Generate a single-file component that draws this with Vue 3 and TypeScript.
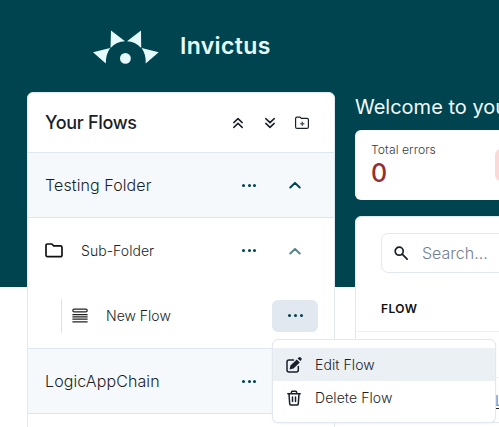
<script setup lang="ts">
interface MenuItem { label: string; icon: 'edit' | 'trash'; active: boolean }
const menu: MenuItem[] = [
  { label: 'Edit Flow', icon: 'edit', active: true },
  { label: 'Delete Flow', icon: 'trash', active: false },
]
</script>

<template>
  <div class="page">
    <header class="brand">
      <svg class="logo" width="66" height="34" viewBox="0 0 66 34">
        <path d="M18 .6 32 11.3Q23.4 11.6 17.5 18Z" />
        <path d="M48 .6 34 11.3Q42.2 11.6 48.2 18Z" />
        <path d="M0 22.2 17.2 17.9Q12.5 24.5 12.8 33.5Z" />
        <path d="M65.7 22.2 48.6 17.9Q53.3 24.5 52.7 33.5Z" />
        <circle cx="32.4" cy="28.4" r="5.4" />
      </svg>
      <span class="name">Invictus</span>
    </header>
    <div class="columns">
      <aside class="panel">
        <div class="row head">
          <h2>Your Flows</h2>
          <svg class="i1" width="12" height="12" viewBox="0 0 12 12"><path d="m1.8 5.6 4.2-4 4.2 4M1.8 10.4l4.2-4 4.2 4" /></svg>
          <svg class="i2" width="12" height="12" viewBox="0 0 12 12"><path d="m1.8 1.6 4.2 4 4.2-4M1.8 6.4l4.2 4 4.2-4" /></svg>
          <svg class="i3" width="16" height="14" viewBox="0 0 16 14"><path d="M1.6 10.9V2.6q0-1.5 1.5-1.5h2.7l1.7 1.3h5.5q1.4 0 1.4 1.4v7.1q0 1.5-1.4 1.5H3.1q-1.5 0-1.5-1.5Z" /><path d="M8.3 6.3v3M6.8 7.8h3" class="plus" /></svg>
        </div>
        <div class="row folder">
          <span class="title">Testing Folder</span>
          <i class="dots"><b /><b /><b /></i>
          <svg class="chev" width="12" height="8" viewBox="0 0 12 8"><path d="m1.3 6.5 4.7-4.6 4.7 4.6" /></svg>
        </div>
        <div class="row sub">
          <svg class="fold" width="18" height="15" viewBox="0 0 18 15"><path d="M1 12V2.6Q1 1 2.6 1h4.2l1.9 1.8h6.7Q17 2.8 17 4.4V12q0 1.7-1.6 1.7H2.6Q1 13.7 1 12Z" /></svg>
          <span class="small">Sub-Folder</span>
          <i class="dots"><b /><b /><b /></i>
          <svg class="chev faded" width="12" height="8" viewBox="0 0 12 8"><path d="m1.3 6.5 4.7-4.6 4.7 4.6" /></svg>
        </div>
        <div class="row flow">
          <span class="rule" />
          <svg class="stack" width="16" height="15" viewBox="0 0 16 15"><rect x=".8" y="1.1" width="14.4" height="2.8" rx="1.4" /><path d="M.4 6.6h15.2M.4 8.8h15.2M.4 11.2h15.2M.4 13.9h15.2" /></svg>
          <span class="small">New Flow</span>
          <button class="more"><i class="dots"><b /><b /><b /></i></button>
        </div>
        <div class="row folder">
          <span class="title">LogicAppChain</span>
          <i class="dots"><b /><b /><b /></i>
        </div>
      </aside>
      <main class="main">
        <h1>Welcome to you</h1>
        <section class="stat">
          <div><p class="label">Total errors</p><p class="value">0</p></div>
          <span class="badge" />
        </section>
        <section class="table">
          <div class="search">
            <svg width="14" height="14" viewBox="0 0 14 14"><circle cx="5.2" cy="5.2" r="4" /><path d="m8.2 8.2 4.9 4.9" /></svg>
            <span>Search...</span>
          </div>
          <div class="th">FLOW</div>
          <div class="tr" />
          <div class="tr second"><a class="link">L</a></div>
        </section>
      </main>
    </div>
    <div class="menu">
      <div v-for="m in menu" :key="m.label" class="item" :class="{ active: m.active }">
        <svg v-if="m.icon === 'edit'" width="16" height="16" viewBox="0 0 16 16">
          <path d="M7.5 3H3Q1 3 1 5v8q0 2 2 2h7.3q2 0 2-2V9.5" class="line" />
          <path d="m3.6 12.4.8-4 6.4-6 3 3-6.3 6.2Z M11.6 1.6 12.7.5q1-.8 2 0l.6.6q.8 1 0 2l-1 1Z" class="fill" />
        </svg>
        <svg v-else width="16" height="16" viewBox="0 0 16 16"><path d="M1.8 3.7h12.4M5.4 3.5V2.2q0-1 1-1h3.2q1 0 1 1v1.3M3 4l.7 9.6q.1 1.5 1.6 1.5h5.4q1.5 0 1.6-1.5L13 4M6.5 6.9v4.6M9.5 6.9v4.6" class="line" /></svg>
        <span>{{ m.label }}</span>
      </div>
    </div>
  </div>
</template>

<style>
body { margin: 0; overflow: hidden; }
</style>

<style scoped>
* { box-sizing: border-box; }
.page { position: relative; width: 499px; height: 427px; overflow: hidden; font-family: Inter, sans-serif; color: #1b1f27; background: linear-gradient(#00444f 287px, #fff 287px); }
svg { flex: none; fill: none; stroke: #1b1f2b; stroke-width: 1.5; stroke-linecap: round; stroke-linejoin: round; }
.brand { height: 92px; padding: 30px 0 0 93px; display: flex; align-items: flex-start; }
.logo { fill: #e6fbff; stroke: none; }
.name { margin-left: 21px; font-size: 23px; line-height: 32px; font-weight: 600; letter-spacing: .35px; color: #e6fbff; }
.columns { display: flex; align-items: flex-start; }
.panel { width: 308px; height: 345px; margin-left: 27px; flex: none; background: #fff; border: 1px solid #e1e8f0; border-radius: 6px; overflow: hidden; }
.row { display: flex; align-items: center; height: 65px; padding-left: 17px; border-bottom: 1px solid #dde7ef; }
.head { height: 60px; }
h2 { margin: 0; width: 187px; font-size: 18px; font-weight: 500; letter-spacing: -.3px; }
.i2 { margin-left: 20px; }
.i3 { margin-left: 18px; stroke-width: 1.2; }
.plus { stroke: #555b65; stroke-width: 1.5; }
.folder { background: #f5f9fc; }
.title { width: 197px; font-size: 16px; font-weight: 350; letter-spacing: .1px; white-space: nowrap; }
.dots { width: 14px; display: flex; justify-content: space-between; }
.dots b { width: 3px; height: 3px; border-radius: 50%; background: #00444f; }
.more .dots { width: 15px; }
.chev { margin-left: 33px; stroke: #00444f; stroke-width: 2; }
.faded { opacity: .65; }
.sub { border-bottom: 0; }
.fold { stroke: #111; stroke-width: 1.7; }
.small { font-size: 14px; font-weight: 350; white-space: nowrap; }
.sub .small { width: 161px; margin-left: 18px; letter-spacing: .05px; }
.flow { height: 66px; padding-left: 33px; }
.rule { width: 1px; height: 34px; background: #dde3eb; }
.stack { margin-left: 10px; stroke: #222; stroke-width: 1.2; stroke-linecap: butt; }
.flow .small { width: 148px; margin-left: 18px; }
.more { width: 46px; height: 32px; margin-left: 18px; padding: 0; display: flex; align-items: center; justify-content: center; border: 0; border-radius: 6px; background: #e1e8f0; }
.main { width: 200px; margin-left: 20px; flex: none; }
h1 { margin: 0 0 8px; height: 30px; font-size: 20px; line-height: 30px; font-weight: 400; color: #f1fbff; white-space: nowrap; }
.stat { height: 70px; padding: 12px 16px; display: flex; background: #fff; border-radius: 6px; }
.stat div { width: 124px; flex: none; }
p { margin: 0; }
.label { font-size: 12.2px; line-height: 16px; font-weight: 350; letter-spacing: .05px; color: #373c43; }
.value { font-size: 25px; line-height: 31px; font-weight: 500; color: #9b2c2c; }
.badge { width: 32px; height: 32px; margin-top: 7px; border-radius: 6px; background: #fed7d7; flex: none; }
.table { height: 207px; margin-top: 16px; background: #fff; border: 1px solid #e1e8f0; border-radius: 6px; }
.search { height: 40px; margin: 16px 0 0 25px; padding-left: 12px; display: flex; align-items: center; gap: 14px; border: 1px solid #e1e8f0; border-radius: 7px; color: #737e91; font-size: 16px; font-weight: 350; }
.search svg { stroke-width: 1.7; }
.th { height: 58px; margin-left: 1px; padding: 25px 0 0 24px; font-size: 12px; line-height: 21px; font-weight: 600; letter-spacing: .4px; color: #111; }
.tr { height: 46px; margin-left: 1px; border-top: 1px solid #e9f0f6; }
.second { height: 45px; padding: 12px 0 0 138px; }
.link { font-size: 14px; color: #3aa9e0; text-decoration: underline #222; text-underline-offset: 2px; }
.menu { position: absolute; left: 272px; top: 339px; width: 224px; height: 84px; padding-top: 8px; background: #fff; border: 1px solid #e1e8f0; border-radius: 6px; box-shadow: 0 1px 2px #0000000d; }
.item { height: 33px; padding-left: 13px; display: flex; align-items: center; gap: 13px; font-size: 14px; font-weight: 350; letter-spacing: .07px; }
.item.active { background: #ebf0f5; }
.item .fill { fill: #1b1f2b; stroke: none; }
</style>
